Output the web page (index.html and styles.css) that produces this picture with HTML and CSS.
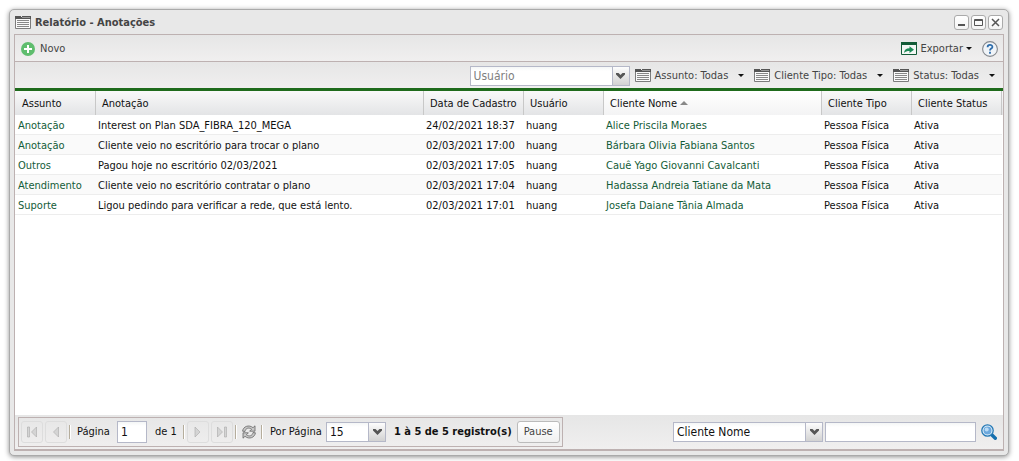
FILE: index.html
```html
<!DOCTYPE html>
<html lang="pt-BR">
<head>
<meta charset="utf-8">
<title>Relatório - Anotações</title>
<link rel="stylesheet" href="styles.css">
</head>
<body>
<svg class="sprite" aria-hidden="true">
  <symbol id="list" viewBox="0 0 16 13">
    <path fill="#fafafa" stroke="#7c7c7c" d="M.5 2.500h15v10H.5z"/>
    <path fill="#555" d="M0 0h6v1h1V0h9v3H0z"/><path fill="#999" d="M7 1h8v1H7z"/>
    <path stroke="#888" d="M2 4.500h12M2 6.500h12M2 8.500h12M2 10.500h12"/>
  </symbol>
  <symbol id="chevron" viewBox="0 0 9 6"><path fill="#555" d="M0 0h2.500l2 2 2-2H9v1.500L4.500 6 0 1.500z"/></symbol>
  <symbol id="caret" viewBox="0 0 6 3"><path fill="#111" d="M0 0h6L3 3z"/></symbol>
</svg>
<main class="window">
  <header class="titlebar">
    <svg class="icon-list"><use href="#list"/></svg>
    <h1>Relatório - Anotações</h1>
    <button class="tool" aria-label="Minimizar"><svg viewBox="0 0 13 13"><path stroke="#555" stroke-width="2" d="M3 9h7"/></svg></button>
    <button class="tool" aria-label="Maximizar"><svg viewBox="0 0 13 13"><path fill="none" stroke="#555" d="M2.500 3.500h8v6h-8zM2.500 4.500h8"/></svg></button>
    <button class="tool" aria-label="Fechar"><svg viewBox="0 0 13 13"><path fill="none" stroke="#555" stroke-width="1.500" d="M3 3l7 7M10 3l-7 7"/></svg></button>
  </header>
  <section class="panel">
    <div class="bar bar-actions">
      <button class="action">
        <svg class="icon-add" viewBox="0 0 14 14"><circle cx="7" cy="7" r="7" fill="#5fbd6e"/><path stroke="#fff" stroke-width="2" d="M7 3v8M3 7h8"/></svg>Novo
      </button>
      <span class="spacer"></span>
      <button class="action export">
        <svg class="icon-export" viewBox="0 0 16 13"><path fill="#f4f7f5" stroke="#135c38" d="M.5.5h15v12H.5z"/><path fill="#135c38" d="M0 0h16v3H0z"/><path fill="#1b8a56" d="M3 11c.2-3 2-4.700 5.500-4.700V4.200L13 7.700l-4.500 3.400V9C6 9 4.500 9.500 3 11z"/></svg>Exportar
        <svg class="caret"><use href="#caret"/></svg>
      </button>
      <button class="help" aria-label="Ajuda"><svg viewBox="0 0 16 16"><circle cx="8" cy="8" r="7.400" fill="#f0f4f8" stroke="#85898e" stroke-width="1.100"/><path fill="none" stroke="#2c6cab" stroke-width="1.800" d="M5.600 6.200C5.600 3.200 10.400 3.200 10.400 5.900c0 1.700-2.400 1.600-2.400 3.500M8 10.800v1.900"/></svg></button>
    </div>
    <div class="bar bar-filters">
      <div class="combo combo-user">
        <input type="text" placeholder="Usuário" aria-label="Usuário">
        <button aria-label="Abrir lista"><svg class="chevron"><use href="#chevron"/></svg></button>
      </div>
      <button class="action filter"><svg class="icon-list"><use href="#list"/></svg>Assunto: Todas<svg class="caret"><use href="#caret"/></svg></button>
      <button class="action filter"><svg class="icon-list"><use href="#list"/></svg>Cliente Tipo: Todas<svg class="caret"><use href="#caret"/></svg></button>
      <button class="action filter"><svg class="icon-list"><use href="#list"/></svg>Status: Todas<svg class="caret"><use href="#caret"/></svg></button>
    </div>
    <div class="grid">
      <table>
        <colgroup><col class="c-subject"><col class="c-note"><col class="c-date"><col class="c-user"><col class="c-name"><col class="c-state"><col class="c-state"><col class="c-end"></colgroup>
        <thead><tr><th>Assunto</th><th>Anotação</th><th>Data de Cadastro</th><th>Usuário</th><th class="sorted" aria-sort="ascending">Cliente Nome <svg class="sort" viewBox="0 0 8 4"><path fill="#888" d="M0 4l4-4 4 4z"/></svg></th><th>Cliente Tipo</th><th>Cliente Status</th><th class="end"></th></tr></thead>
        <tbody>
          <tr><td><a href="#">Anotação</a></td><td>Interest on Plan SDA_FIBRA_120_MEGA</td><td>24/02/2021 18:37</td><td>huang</td><td><a href="#">Alice Priscila Moraes</a></td><td>Pessoa Física</td><td>Ativa</td></tr>
          <tr><td><a href="#">Anotação</a></td><td>Cliente veio no escritório para trocar o plano</td><td>02/03/2021 17:00</td><td>huang</td><td><a href="#">Bárbara Olivia Fabiana Santos</a></td><td>Pessoa Física</td><td>Ativa</td></tr>
          <tr><td><a href="#">Outros</a></td><td>Pagou hoje no escritório 02/03/2021</td><td>02/03/2021 17:05</td><td>huang</td><td><a href="#">Cauê Yago Giovanni Cavalcanti</a></td><td>Pessoa Física</td><td>Ativa</td></tr>
          <tr><td><a href="#">Atendimento</a></td><td>Cliente veio no escritório contratar o plano</td><td>02/03/2021 17:04</td><td>huang</td><td><a href="#">Hadassa Andreia Tatiane da Mata</a></td><td>Pessoa Física</td><td>Ativa</td></tr>
          <tr><td><a href="#">Suporte</a></td><td>Ligou pedindo para verificar a rede, que está lento.</td><td>02/03/2021 17:01</td><td>huang</td><td><a href="#">Josefa Daiane Tânia Almada</a></td><td>Pessoa Física</td><td>Ativa</td></tr>
        </tbody>
      </table>
    </div>
    <footer class="footer">
      <div class="pager">
        <button class="nav" disabled aria-label="Primeira página"><svg viewBox="0 0 12 12"><path fill="#d4d4d4" stroke="#aaa" stroke-width=".6" d="M1.500 1h2v10h-2zM10.500 1v10l-5-5z"/></svg></button>
        <button class="nav" disabled aria-label="Página anterior"><svg viewBox="0 0 12 12"><path fill="#d4d4d4" stroke="#aaa" stroke-width=".6" d="M8.500 1v10l-5-5z"/></svg></button>
        <i class="sep"></i>
        <label class="page-label" for="page">Página</label>
        <input class="page" id="page" type="text" value="1">
        <span class="page-total">de 1</span>
        <i class="sep"></i>
        <button class="nav" disabled aria-label="Próxima página"><svg viewBox="0 0 12 12"><path fill="#d4d4d4" stroke="#aaa" stroke-width=".6" d="M3 1v10l5-5z"/></svg></button>
        <button class="nav" disabled aria-label="Última página"><svg viewBox="0 0 12 12"><path fill="#d4d4d4" stroke="#aaa" stroke-width=".6" d="M8.500 1h2v10h-2zM1.500 1v10l5-5z"/></svg></button>
        <i class="sep"></i>
        <button class="refresh" aria-label="Atualizar"><svg viewBox="0 0 14 14"><g fill="#c8c8c8" stroke="#666" stroke-width=".8" stroke-linejoin="round"><path d="M.6 6.200C1 1.500 7-.8 11 2.700L13 .8v5.400H7.600l2-2C7 2.200 3.500 3 3 6.500z"/><path d="M13.400 7.800C13 12.500 7 14.800 3 11.300L1 13.200V7.800h5.400l-2 2c2.600 2 6.100 1.200 6.600-2.300z"/></g></svg></button>
        <i class="sep"></i>
        <label class="size-label" for="size">Por Página</label>
        <div class="combo combo-size">
          <select id="size"><option>15</option><option>30</option></select>
          <span class="trigger"><svg class="chevron"><use href="#chevron"/></svg></span>
        </div>
        <strong>1 à 5 de 5 registro(s)</strong>
        <button class="pause">Pause</button>
      </div>
      <div class="search">
        <div class="combo combo-field">
          <select aria-label="Campo de busca"><option>Cliente Nome</option><option>Assunto</option></select>
          <span class="trigger"><svg class="chevron"><use href="#chevron"/></svg></span>
        </div>
        <input class="query" type="text" aria-label="Busca">
        <button class="find" aria-label="Buscar"><svg viewBox="0 0 16 16"><path stroke="#1670ae" stroke-width="3.400" stroke-linecap="round" d="M11 11l3.300 3.300"/><circle cx="6.500" cy="6.500" r="5.700" fill="#e4f0fa" stroke="#2479b5" stroke-width="1.300"/><circle cx="6.500" cy="6.500" r="4" fill="#6ba8dd"/><circle cx="5.700" cy="5.500" r="2" fill="#b9dbf5"/></svg></button>
      </div>
    </footer>
  </section>
</main>
</body>
</html>
```
FILE: styles.css
```css
* { box-sizing: border-box; }
body {
  margin: 0;
  padding: 9px 10px 5px 9px;
  height: 100vh;
  background: #fff;
  font: 11px/14px "DejaVu Sans Condensed", "DejaVu Sans", Tahoma, sans-serif;
  color: #111;
}
button, input, select { font: inherit; color: inherit; margin: 0; }
button { border: 0; background: none; padding: 0; }
svg { display: block; flex: none; }
.sprite { position: absolute; width: 0; height: 0; }

.window {
  display: flex;
  flex-direction: column;
  height: 100%;
  padding: 0 4px 4px;
  border: 1px solid #aaa;
  border-radius: 5px;
  background: #e8e8e8;
  box-shadow: 0 1px 5px rgba(0, 0, 0, .45);
}
.titlebar { display: flex; align-items: center; gap: 2px; height: 24px; padding: 1px 1px 0; }
.titlebar h1 { flex: 1; margin: 0 0 0 2px; font-size: 11px; color: #444; }
.icon-list { width: 16px; height: 13px; }
.tool {
  width: 15px;
  height: 15px;
  border: 1px solid #aaa;
  border-radius: 3px;
  background: linear-gradient(#fff, #f4f4f4);
}

.panel {
  display: flex;
  flex: 1;
  flex-direction: column;
  min-height: 0;
  border: 1px solid #bdb1b1;
  border-width: 1px 1px 2px;
}
.bar {
  display: flex;
  flex: none;
  align-items: center;
  height: 27px;
  background: linear-gradient(#e6e6e6, #f0efef);
}
.bar-actions { padding: 1px 5px 0 6px; border-bottom: 1px solid #bdb1b1; }
.bar-filters { justify-content: flex-end; height: 26px; padding: 1px 8px 0 0; }
.spacer { flex: 1; }
.action { display: flex; align-items: center; gap: 5px; color: #444; white-space: nowrap; }
.icon-add { width: 14px; height: 14px; }
.icon-export { width: 16px; height: 13px; }
.export { gap: 3px; }
.caret { width: 6px; height: 3px; }
.help { margin-left: 10px; }
.help svg { width: 16px; height: 16px; }
.filter { gap: 4px; }
.filter .caret { margin-left: 6px; }
.filter + .filter { margin-left: 10px; }

.combo { position: relative; display: flex; height: 20px; }
.combo input, .combo select, .page, .query {
  appearance: none;
  min-width: 0;
  height: 20px;
  padding: 0 3px;
  border: 1px solid #b5b8c8;
  border-radius: 0;
  background: linear-gradient(#f4f6f6, #fff 4px);
  font-size: 12px;
}
.combo input, .combo select { width: 100%; }
.combo input::placeholder { color: #808080; opacity: 1; }
.combo button, .trigger {
  position: absolute;
  top: 0;
  right: 0;
  display: flex;
  align-items: center;
  justify-content: center;
  width: 18px;
  height: 20px;
  border: 1px solid #b5b8c8;
  background: linear-gradient(#fdfdfd, #d2d2d2);
  pointer-events: none;
}
.combo button { pointer-events: auto; }
.chevron { width: 9px; height: 6px; }
.combo-user { width: 160px; margin-right: 5px; }

.grid { flex: 1; min-height: 0; overflow: hidden; border-top: 3px solid #1f6b1c; background: #fff; }
table { width: 100%; border-collapse: separate; border-spacing: 0; table-layout: fixed; }
.c-subject { width: 81px; }
.c-date { width: 100px; }
.c-user { width: 80px; }
.c-name { width: 218px; }
.c-state { width: 90px; }
.c-end { width: 1px; }
th {
  height: 24px;
  padding: 1px 0 0 7px;
  border-right: 1px solid #c8c8c8;
  background: linear-gradient(#f9f9f9, #e3e4e6);
  font-weight: normal;
  text-align: left;
  white-space: nowrap;
}
th:not(:first-child) { padding-left: 6px; }
th.sorted { background: linear-gradient(#fff, #f3f3f4); }
th.end { padding: 0; border: 0; }
.sort { display: inline-block; width: 8px; height: 4px; vertical-align: 2px; }
td {
  height: 20px;
  padding: 2px 0 0 2px;
  border-bottom: 1px solid #ededed;
  white-space: nowrap;
}
td:first-child { padding-left: 3px; }
tr:nth-child(even) td { background: #fafafa; }
a { color: #135c38; text-decoration: none; }

.footer {
  display: flex;
  flex: none;
  align-items: center;
  justify-content: space-between;
  height: 34px;
  padding: 0 6px 0 3px;
  background: linear-gradient(#e6e6e6, #f0efef);
}
.pager {
  display: flex;
  align-items: center;
  height: 30px;
  padding: 0 2px;
  border: 1px solid #bdb1b1;
  white-space: nowrap;
}
.nav {
  display: flex;
  align-items: center;
  justify-content: center;
  width: 22px;
  height: 22px;
  border: 1px solid #ddd;
  border-radius: 3px;
}
.nav + .nav { margin-left: 2px; }
.nav svg { width: 12px; height: 12px; }
.sep { width: 2px; height: 14px; margin: 0 2px; border-left: 1px solid #b5ad9c; border-right: 1px solid #fff; }
.page-label { width: 36px; margin: 0 4px; }
.page { width: 30px; height: 22px; }
.page-total { width: 22px; margin: 0 4px 0 8px; }
.refresh { margin-left: 3px; }
.refresh svg { width: 14px; height: 14px; }
.refresh + .sep { margin-left: 5px; }
.size-label { width: 54px; margin: 0 2px 0 5px; }
.combo-size { width: 60px; }
.pager strong { margin: 0 5px 0 8px; }
.pause {
  width: 43px;
  height: 22px;
  border: 1px solid #bbb;
  border-radius: 3px;
  background: linear-gradient(#fff, #f0f0f0);
  color: #444;
}
.search { display: flex; align-items: center; }
.combo-field { width: 150px; margin-right: 2px; }
.query { width: 151px; }
.find { margin-left: 5px; }
.find svg { width: 16px; height: 16px; }
```
